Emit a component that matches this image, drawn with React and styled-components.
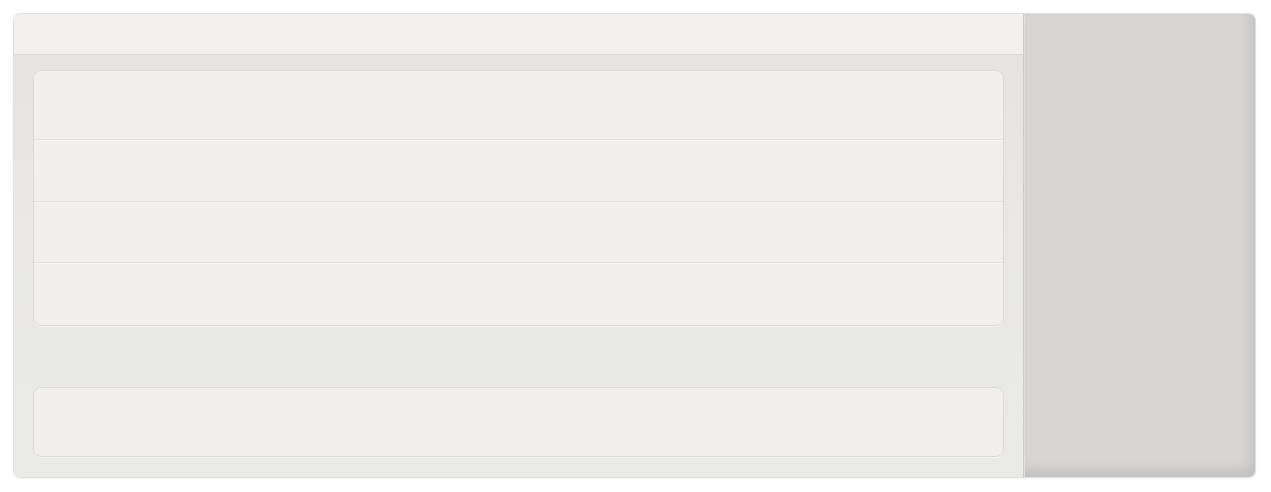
import styled, { createGlobalStyle } from 'styled-components';

const GlobalStyle = createGlobalStyle`
  html, body {
    margin: 0;
    padding: 0;
    background: #ffffff;
    font-family: 'Liberation Sans', Arial, sans-serif;
  }
`;

const Page = styled.div`
  width: 1271px;
  height: 492px;
  box-sizing: border-box;
  padding: 13px 15px 14px 13px;
`;

const Frame = styled.div`
  height: 100%;
  box-sizing: border-box;
  border: 1px solid #e0e0df;
  border-radius: 7px;
  overflow: hidden;
  display: grid;
  grid-template-columns: 1009px 1fr;
  box-shadow: 0 1px 2px rgba(0, 0, 0, 0.05);
`;

const Main = styled.section`
  display: flex;
  flex-direction: column;
  background: #e9e8e7;
`;

const Header = styled.header`
  height: 40px;
  flex-shrink: 0;
  background: #f2f1f0;
  border-bottom: 1px solid #d8d8d7;
  box-shadow: 0 1px 0 #f5f5f4;
`;

const Body = styled.div`
  flex: 1;
  display: flex;
  flex-direction: column;
  padding: 15px 19px 20px 19px;
  background: linear-gradient(#e5e4e3, #e9e8e7 40%, #eaeae9);
`;

const Card = styled.div`
  background: #f1f0ef;
  border: 1px solid #dbdad9;
  border-radius: 8px;
  box-shadow: 0 1px 0 rgba(255, 255, 255, 0.5);
  display: flex;
  flex-direction: column;
  overflow: hidden;
`;

const Row = styled.div`
  height: ${(props) => props.h}px;
  box-sizing: border-box;
  border-top: ${(props) => (props.first ? 'none' : '1px solid #e2e1e0')};
  box-shadow: ${(props) => (props.first ? 'none' : 'inset 0 1px 0 #f6f6f5')};
`;

const Spacer = styled.div`
  height: 61px;
  flex-shrink: 0;
`;

const Side = styled.aside`
  background: #d7d6d5;
  border-left: 1px solid #cbcac9;
  box-shadow: inset 1px 0 0 #e2e1e0, inset -5px -7px 12px rgba(0, 0, 0, 0.1);
`;

const rows = [68, 62, 61, 63];

export default function App() {
  return (
    <>
      <GlobalStyle />
      <Page>
        <Frame>
          <Main>
            <Header />
            <Body>
              <Card>
                {rows.map((h, idx) => (
                  <Row key={idx} h={h} first={idx === 0} />
                ))}
              </Card>
              <Spacer />
              <Card>
                <Row h={68} first />
              </Card>
            </Body>
          </Main>
          <Side />
        </Frame>
      </Page>
    </>
  );
}
